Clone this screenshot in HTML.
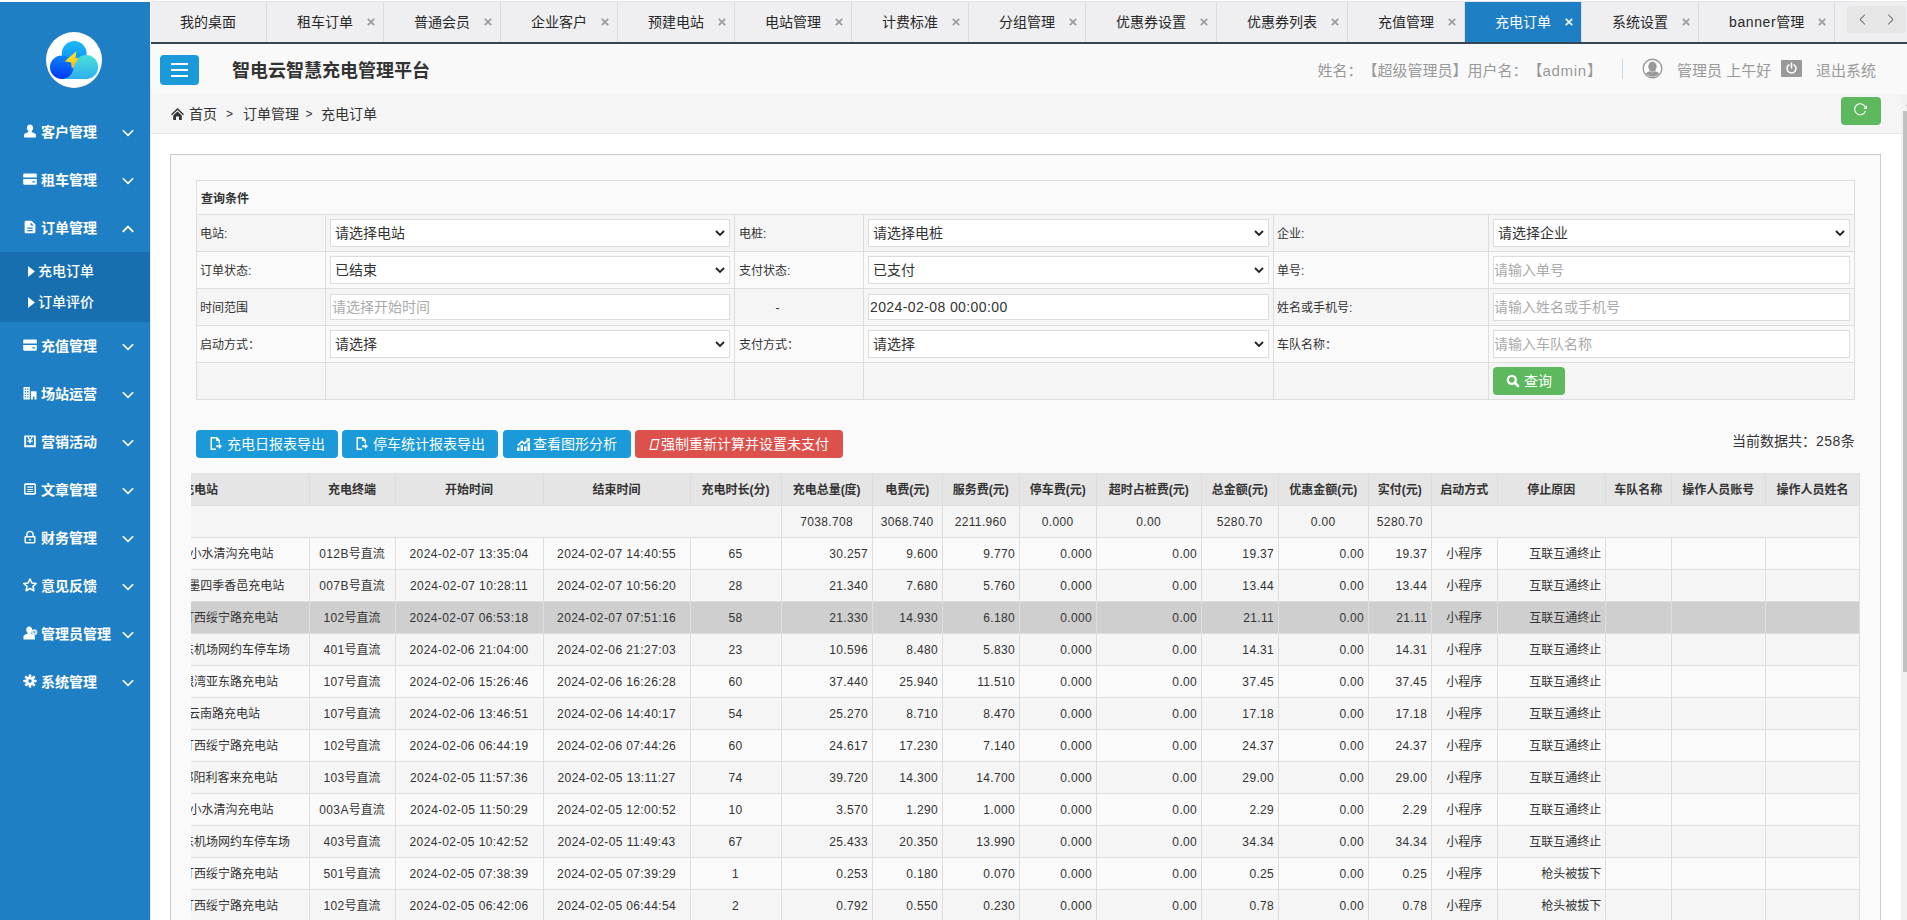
<!DOCTYPE html><html lang="zh-CN"><head><meta charset="utf-8"><title>智电云智慧充电管理平台</title><style>

html,body{margin:0;padding:0}
body{width:1907px;height:920px;overflow:hidden;position:relative;background:#fff;
 font-family:"Liberation Sans","Noto Sans CJK SC",sans-serif;color:#333;font-size:14px;line-height:1.5;text-spacing-trim:space-all}
*{box-sizing:border-box}
.abs{position:absolute}
svg{display:block}
/* sidebar */
#aside{position:absolute;left:0;top:2px;width:150px;height:918px;background:#1f7fc4}
#logo{position:absolute;left:46px;top:30px;width:56px;height:56px;border-radius:50%;background:#fff;overflow:hidden}
.mi{position:absolute;left:0;width:150px;height:48px;color:#fff;font-size:14px;font-weight:bold;line-height:48px}
.mi .ic{position:absolute;left:23px;top:16px;width:14px;height:14px}
.mi .tx{position:absolute;left:41px;top:0;white-space:nowrap}
.mi .ch{position:absolute;left:122px;top:21px;width:12px;height:8px}
#sub{position:absolute;left:0;top:250px;width:150px;height:70px;background:#176fb0}
.si{position:absolute;left:0;width:150px;height:31px;line-height:31px;color:#fff;font-size:14px;font-weight:500}
.si .ar{position:absolute;left:28px;top:10px;width:7px;height:11px}
.si .tx{position:absolute;left:38px;top:0;white-space:nowrap}
/* tabs */
#tabs{position:absolute;left:151px;top:1px;width:1756px;height:43px;border-top:1px solid #e4e4e6;background:#efeff1;border-bottom:2px solid #344556}
.tab{position:absolute;top:0;height:40px;border-right:1px solid #dcdcdd;font-size:14px;line-height:40px;color:#282828;white-space:nowrap}
.tab .t{position:absolute;left:30px;top:0}
.tab .x{position:absolute;right:8px;top:16px;width:8px;height:8px}
.tab.act{background:#1f7fc4;color:#fff}
#tabnav{position:absolute;left:1696px;top:4px;width:59px;height:27px;background:#e6e6e6;border-radius:4px}
/* header */
#hd{position:absolute;left:151px;top:44px;width:1756px;height:50px;background:#f9f9f9}
#mbtn{position:absolute;left:9px;top:11px;width:39px;height:30px;background:#1b9ad9;border-radius:4px}
#title{position:absolute;left:81px;top:2px;line-height:50px;font-size:18px;font-weight:bold;color:#333;white-space:nowrap}
.hinfo{position:absolute;top:1px;line-height:51px;font-size:15px;color:#999;white-space:nowrap}
/* breadcrumb */
#bc{position:absolute;left:151px;top:94px;width:1750px;height:40px;background:#f5f5f5;border-bottom:1px solid #e5e5e5;font-size:14px;color:#333}
#bc span{position:absolute;top:1px;line-height:39px;white-space:nowrap}
#rf{position:absolute;left:1690px;top:3px;width:40px;height:28px;border-radius:4px;background:#5eb95e}
#lb{position:absolute;left:150px;top:44px;width:1px;height:876px;background:#e8e8e8}
/* scrollbar */
#sbt{position:absolute;left:1901px;top:94px;width:6px;height:826px;background:#f1f1f1}
#sbh{position:absolute;left:1903px;top:111px;width:4px;height:561px;background:#c1c1c1}
/* panel */
#panel{position:absolute;left:170px;top:154px;width:1711px;height:800px;border:1px solid #ccc;background:#fafafa}
/* query table */
#q{position:absolute;left:196px;top:180px;border-collapse:collapse;table-layout:fixed;width:1658px;font-size:12px;color:#333}
#q td{border:1px solid #ddd;padding:0;height:37px;vertical-align:top;position:relative}
#q tr.h td{height:34px;background:#fafafa;font-weight:bold;padding:4px 0 0 4px;line-height:29px}
#q tr.o td{background:#f5f5f5}
#q tr.e td{background:#fafafa}
#q td.l{padding:2px 0 0 3px;line-height:34px}
#q td.l3{padding-left:4px}
.sel,.inp{position:absolute;left:4px;top:4px;right:4px;background:#fff;border:1px solid #ddd;font-size:14px;color:#333;white-space:nowrap}
.sel{height:28px;line-height:27px;padding-left:4px}
.sel svg{position:absolute;right:4px;top:10px}
.inp{height:26px;line-height:25px;padding-left:1px;top:5px}
.dt{letter-spacing:.4px}
.inp.b{top:4px;height:28px;line-height:27px;padding-left:0}
.ph{color:#aaa}
#qb{position:absolute;left:4px;top:4px;width:72px;height:28px;border-radius:4px;background:#5eb95e;color:#fff;font-size:14px;line-height:28px}
/* buttons */
.btn{position:absolute;top:430px;height:28px;border-radius:4px;color:#fff;font-size:14px;line-height:28px;white-space:nowrap}
.btn.b{background:#1b9ad9}
.btn.r{background:#dd514c}
.btn .tx{position:absolute;top:0}
.btn svg{position:absolute}
#cnt{position:absolute;left:1732px;top:431px;font-size:14px;line-height:21px;color:#333;white-space:nowrap}
/* data table */
#dw{position:absolute;left:191px;top:473px;width:1669px;height:447px;overflow:hidden}
#d{border-collapse:collapse;table-layout:fixed;width:1669px;font-size:12px;color:#333}
#d td,#d th{border:1px solid #ddd;border-left:none;border-top:none;height:32px;padding:2px 4px 0;line-height:29px;white-space:nowrap;overflow:hidden;font-weight:normal}
#d th{background:#e5e5e5;font-weight:bold;text-align:center;color:#333;padding-top:4px;line-height:27px}
#d tr.s td{background:#f5f5f5;text-align:center}
#d tr.o td{background:#fafafa}
#d tr.e td{background:#f5f5f5}
#d tr.hv td{background:#cfcfcf}
#d .c{text-align:center}
#d .r{text-align:right}
#d .f{text-align:left;padding-left:0;padding-right:0}
#d .f span{display:inline-block}
.num{letter-spacing:.35px}
#d .r.num{padding-right:3.600px}
#d .w{padding-right:3.500px}
#d .tm{letter-spacing:.4px}

</style></head><body>
<div id="aside">
<div id="logo"><svg width="56" height="56" viewBox="0 0 56 56" style=""><defs>
<linearGradient id="g1" x1="0" y1="0" x2="0" y2="1"><stop offset="0" stop-color="#1bb8fa"/><stop offset="1" stop-color="#0a8cf5"/></linearGradient>
<linearGradient id="g2" x1="0.500" y1="0" x2="0.400" y2="1"><stop offset="0" stop-color="#0d84f8"/><stop offset="1" stop-color="#0336f4"/></linearGradient>
<linearGradient id="g3" x1="0" y1="0" x2="0" y2="1"><stop offset="0" stop-color="#4ae0d8"/><stop offset="1" stop-color="#2eb0ee"/></linearGradient>
<linearGradient id="g4" x1="0.300" y1="0" x2="0.700" y2="1"><stop offset="0" stop-color="#ffe61c"/><stop offset=".55" stop-color="#ffd422"/><stop offset="1" stop-color="#f9a631"/></linearGradient>
</defs>
<circle cx="28.200" cy="21.500" r="12.400" fill="url(#g1)"/>
<path d="M16 46.900h24.200a11.900 11.900 0 1 0-11.900-11.900H26V40H16z" fill="url(#g3)"/>
<circle cx="15.700" cy="35.200" r="11.700" fill="url(#g2)"/>
<path d="M30.400 19.200L18.800 29.200l6.300 1.200.8 6.500 6.600-10.600-3-.3z" fill="url(#g4)"/></svg></div>
<div class="mi" style="top:106px"><span class="ic"><svg width="14" height="14" viewBox="0 0 14 14" style=""><path fill="#fff" d="M7 .6c1.9 0 3.1 1.4 3.1 3.3 0 1.3-.6 2.5-1.4 3.2v.9l3.300 1.400c.6.3.9.8.9 1.400v2.600H1.100v-2.600c0-.6.3-1.100.9-1.400L5.300 8V7.100C4.500 6.400 3.900 5.200 3.900 3.900 3.900 2 5.100.6 7 .6z"/></svg></span><span class="tx">客户管理</span><span class="ch"><svg width="12" height="8" viewBox="0 0 12 8" style=""><path fill="none" stroke="#fff" stroke-width="1.600" d="M.8 1.200L6 6.400 11.200 1.200"/></svg></span></div>
<div class="mi" style="top:154px"><span class="ic"><svg width="14" height="14" viewBox="0 0 14 14" style=""><path fill="#fff" fill-rule="evenodd" d="M1.400 1.600h11.200c.7 0 1.200.5 1.200 1.200V5.500H.2V2.800c0-.7.5-1.200 1.200-1.200zM.2 7h13.600v4.600c0 .7-.5 1.200-1.200 1.200H1.400c-.7 0-1.200-.5-1.200-1.200zM9.400 9.200v1.300h2.600V9.200z"/></svg></span><span class="tx">租车管理</span><span class="ch"><svg width="12" height="8" viewBox="0 0 12 8" style=""><path fill="none" stroke="#fff" stroke-width="1.600" d="M.8 1.200L6 6.400 11.200 1.200"/></svg></span></div>
<div class="mi" style="top:202px"><span class="ic"><svg width="14" height="14" viewBox="0 0 14 14" style=""><path fill="#fff" fill-rule="evenodd" d="M3 .8h5.600L12.400 4.500V11.700c0 .9-.7 1.600-1.600 1.600H3.200c-.9 0-1.600-.7-1.600-1.600V2.300C1.600 1.500 2.200.8 3 .8zM7.600 2.400v3.100h3.200zM4.300 7.400v1.300h5.400V7.400zM4.300 9.900v1.300h5.400V9.900z"/></svg></span><span class="tx">订单管理</span><span class="ch"><svg width="12" height="8" viewBox="0 0 12 8" style=""><path fill="none" stroke="#fff" stroke-width="1.900" d="M.8 6.800L6 1.600 11.200 6.800"/></svg></span></div>
<div class="mi" style="top:320px"><span class="ic"><svg width="14" height="14" viewBox="0 0 14 14" style=""><path fill="#fff" fill-rule="evenodd" d="M1.400 1.600h11.200c.7 0 1.200.5 1.200 1.200V5.500H.2V2.800c0-.7.5-1.200 1.200-1.200zM.2 7h13.600v4.600c0 .7-.5 1.200-1.200 1.200H1.400c-.7 0-1.200-.5-1.200-1.200zM9.400 9.200v1.300h2.600V9.200z"/></svg></span><span class="tx">充值管理</span><span class="ch"><svg width="12" height="8" viewBox="0 0 12 8" style=""><path fill="none" stroke="#fff" stroke-width="1.600" d="M.8 1.200L6 6.400 11.200 1.200"/></svg></span></div>
<div class="mi" style="top:368px"><span class="ic"><svg width="14" height="14" viewBox="0 0 14 14" style=""><path fill="#fff" fill-rule="evenodd" d="M.5 1h6.300v12.500H.5zM7.900 5.200H13.500V13.500H11.400V10.500H9.900v3H7.900zM1.800 2.500v1.300h1.300V2.500zM4.200 2.500v1.300h1.300V2.500zM1.800 5.100v1.300h1.300V5.100zM4.200 5.100v1.300h1.300V5.100zM1.800 7.700V9h1.300V7.700zM4.200 7.700V9h1.300V7.700zM1.800 10.300v1.300h1.300v-1.300zM4.200 10.300v1.300h1.300v-1.300z"/></svg></span><span class="tx">场站运营</span><span class="ch"><svg width="12" height="8" viewBox="0 0 12 8" style=""><path fill="none" stroke="#fff" stroke-width="1.600" d="M.8 1.200L6 6.400 11.200 1.200"/></svg></span></div>
<div class="mi" style="top:416px"><span class="ic"><svg width="14" height="14" viewBox="0 0 14 14" style=""><path fill="#fff" fill-rule="evenodd" d="M1.200 1.500h11.600v11.800H1.200zM3.100 2.800v8.400h7.800V2.800zM4.200 2.800h1.400L7 5.600 8.400 2.800H9.800L7.800 6.600H9.700v1.100H7.700v1.900H6.300V7.700H4.300V6.600H6.200z"/></svg></span><span class="tx">营销活动</span><span class="ch"><svg width="12" height="8" viewBox="0 0 12 8" style=""><path fill="none" stroke="#fff" stroke-width="1.600" d="M.8 1.200L6 6.400 11.200 1.200"/></svg></span></div>
<div class="mi" style="top:464px"><span class="ic"><svg width="14" height="14" viewBox="0 0 14 14" style=""><path fill="#fff" fill-rule="evenodd" d="M2.700 1.300h8.600c1 0 1.700.7 1.700 1.700v8c0 1-.7 1.700-1.700 1.700H2.700C1.700 12.700 1 12 1 11V3c0-1 .7-1.700 1.700-1.700zM2.500 2.900v8.200h9V2.900zM4.300 4.400h5.800v1.400H4.300zM4.300 7h5.800v1H4.300zM4.300 9h5.800v1H4.300z"/></svg></span><span class="tx">文章管理</span><span class="ch"><svg width="12" height="8" viewBox="0 0 12 8" style=""><path fill="none" stroke="#fff" stroke-width="1.600" d="M.8 1.200L6 6.400 11.200 1.200"/></svg></span></div>
<div class="mi" style="top:512px"><span class="ic"><svg width="14" height="14" viewBox="0 0 14 14" style=""><path fill="#fff" fill-rule="evenodd" d="M7 .7c2.100 0 3.800 1.600 3.800 3.700V6h.5c.7 0 1.200.5 1.200 1.200v5c0 .7-.5 1.200-1.200 1.200H2.700c-.7 0-1.200-.5-1.200-1.200v-5C1.500 6.500 2 6 2.700 6h.5V4.400C3.200 2.300 4.900.7 7 .7zM4.600 6h4.800V4.400C9.400 3.100 8.300 2.100 7 2.100S4.600 3.100 4.600 4.400zM2.900 7.400v4.600h8.200V7.400zM6.100 8.900h1.800v1.700H6.100z"/></svg></span><span class="tx">财务管理</span><span class="ch"><svg width="12" height="8" viewBox="0 0 12 8" style=""><path fill="none" stroke="#fff" stroke-width="1.600" d="M.8 1.200L6 6.400 11.200 1.200"/></svg></span></div>
<div class="mi" style="top:560px"><span class="ic"><svg width="14" height="14" viewBox="0 0 14 14" style=""><path fill="none" stroke="#fff" stroke-width="1.600" stroke-linejoin="round" d="M7 1l1.900 4 4.300.5-3.200 2.900.9 4.300L7 10.500 3.100 12.700l.9-4.300L.8 5.500l4.300-.5z"/></svg></span><span class="tx">意见反馈</span><span class="ch"><svg width="12" height="8" viewBox="0 0 12 8" style=""><path fill="none" stroke="#fff" stroke-width="1.600" d="M.8 1.200L6 6.400 11.200 1.200"/></svg></span></div>
<div class="mi" style="top:608px"><span class="ic"><svg width="15" height="14" viewBox="0 0 15 14" style=""><path fill="#fff" d="M6.200.5c1.800 0 3 1.400 3 3.200 0 1.300-.6 2.400-1.300 3.100v.9l3.100 1.300c.6.300.9.800.9 1.400v3H.5v-3c0-.6.300-1.100.9-1.400L4.500 7.700V6.800C3.800 6.100 3.200 5 3.200 3.700c0-1.800 1.200-3.200 3-3.200z"/><circle cx="11.400" cy="6.200" r="3" fill="#fff" fill-opacity=".8"/><circle cx="11.400" cy="6.200" r="1.100" fill="#1f7fc4" fill-opacity=".5"/></svg></span><span class="tx">管理员管理</span><span class="ch"><svg width="12" height="8" viewBox="0 0 12 8" style=""><path fill="none" stroke="#fff" stroke-width="1.600" d="M.8 1.200L6 6.400 11.200 1.200"/></svg></span></div>
<div class="mi" style="top:656px"><span class="ic"><svg width="14" height="14" viewBox="0 0 14 14" style=""><g fill="#fff"><circle cx="7" cy="7" r="4.300"/><g transform="rotate(0 7 7)"><rect x="5.700" y=".4" width="2.600" height="3" rx=".6"/><rect x="5.700" y="10.600" width="2.600" height="3" rx=".6"/></g><g transform="rotate(45 7 7)"><rect x="5.700" y=".4" width="2.600" height="3" rx=".6"/><rect x="5.700" y="10.600" width="2.600" height="3" rx=".6"/></g><g transform="rotate(90 7 7)"><rect x="5.700" y=".4" width="2.600" height="3" rx=".6"/><rect x="5.700" y="10.600" width="2.600" height="3" rx=".6"/></g><g transform="rotate(135 7 7)"><rect x="5.700" y=".4" width="2.600" height="3" rx=".6"/><rect x="5.700" y="10.600" width="2.600" height="3" rx=".6"/></g></g><circle cx="7" cy="7" r="1.700" fill="#1f7fc4"/></svg></span><span class="tx">系统管理</span><span class="ch"><svg width="12" height="8" viewBox="0 0 12 8" style=""><path fill="none" stroke="#fff" stroke-width="1.600" d="M.8 1.200L6 6.400 11.200 1.200"/></svg></span></div>
<div id="sub">
<div class="si" style="top:4px"><span class="ar"><svg width="7" height="11" viewBox="0 0 7 11" style=""><path fill="#fff" d="M0 0L7 5.500 0 11z"/></svg></span><span class="tx">充电订单</span></div>
<div class="si" style="top:35px"><span class="ar"><svg width="7" height="11" viewBox="0 0 7 11" style=""><path fill="#fff" d="M0 0L7 5.500 0 11z"/></svg></span><span class="tx">订单评价</span></div>
</div></div>
<div id="tabs">
<div class="tab" style="left:0px;width:116px"><span class="t" style="left:29px">我的桌面</span></div>
<div class="tab" style="left:116px;width:117px"><span class="t">租车订单</span><span class="x"><svg width="8" height="8" viewBox="0 0 8 8" style=""><path stroke="#9c9c9c" stroke-width="1.700" d="M.8.8l6.400 6.400M7.200.8L.8 7.200"/></svg></span></div>
<div class="tab" style="left:233px;width:117px"><span class="t">普通会员</span><span class="x"><svg width="8" height="8" viewBox="0 0 8 8" style=""><path stroke="#9c9c9c" stroke-width="1.700" d="M.8.8l6.400 6.400M7.200.8L.8 7.200"/></svg></span></div>
<div class="tab" style="left:350px;width:117px"><span class="t">企业客户</span><span class="x"><svg width="8" height="8" viewBox="0 0 8 8" style=""><path stroke="#9c9c9c" stroke-width="1.700" d="M.8.8l6.400 6.400M7.200.8L.8 7.200"/></svg></span></div>
<div class="tab" style="left:467px;width:117px"><span class="t">预建电站</span><span class="x"><svg width="8" height="8" viewBox="0 0 8 8" style=""><path stroke="#9c9c9c" stroke-width="1.700" d="M.8.8l6.400 6.400M7.200.8L.8 7.200"/></svg></span></div>
<div class="tab" style="left:584px;width:117px"><span class="t">电站管理</span><span class="x"><svg width="8" height="8" viewBox="0 0 8 8" style=""><path stroke="#9c9c9c" stroke-width="1.700" d="M.8.8l6.400 6.400M7.200.8L.8 7.200"/></svg></span></div>
<div class="tab" style="left:701px;width:117px"><span class="t">计费标准</span><span class="x"><svg width="8" height="8" viewBox="0 0 8 8" style=""><path stroke="#9c9c9c" stroke-width="1.700" d="M.8.8l6.400 6.400M7.200.8L.8 7.200"/></svg></span></div>
<div class="tab" style="left:818px;width:117px"><span class="t">分组管理</span><span class="x"><svg width="8" height="8" viewBox="0 0 8 8" style=""><path stroke="#9c9c9c" stroke-width="1.700" d="M.8.8l6.400 6.400M7.200.8L.8 7.200"/></svg></span></div>
<div class="tab" style="left:935px;width:131px"><span class="t">优惠券设置</span><span class="x"><svg width="8" height="8" viewBox="0 0 8 8" style=""><path stroke="#9c9c9c" stroke-width="1.700" d="M.8.8l6.400 6.400M7.200.8L.8 7.200"/></svg></span></div>
<div class="tab" style="left:1066px;width:131px"><span class="t">优惠券列表</span><span class="x"><svg width="8" height="8" viewBox="0 0 8 8" style=""><path stroke="#9c9c9c" stroke-width="1.700" d="M.8.8l6.400 6.400M7.200.8L.8 7.200"/></svg></span></div>
<div class="tab" style="left:1197px;width:117px"><span class="t">充值管理</span><span class="x"><svg width="8" height="8" viewBox="0 0 8 8" style=""><path stroke="#9c9c9c" stroke-width="1.700" d="M.8.8l6.400 6.400M7.200.8L.8 7.200"/></svg></span></div>
<div class="tab act" style="left:1314px;width:117px"><span class="t">充电订单</span><span class="x"><svg width="8" height="8" viewBox="0 0 8 8" style=""><path stroke="#e8f0f8" stroke-width="1.800" d="M.8.8l6.400 6.400M7.200.8L.8 7.200"/></svg></span></div>
<div class="tab" style="left:1431px;width:117px"><span class="t">系统设置</span><span class="x"><svg width="8" height="8" viewBox="0 0 8 8" style=""><path stroke="#9c9c9c" stroke-width="1.700" d="M.8.8l6.400 6.400M7.200.8L.8 7.200"/></svg></span></div>
<div class="tab" style="left:1548px;width:136px"><span class="t"><span style="letter-spacing:.6px">banner</span>管理</span><span class="x"><svg width="8" height="8" viewBox="0 0 8 8" style=""><path stroke="#9c9c9c" stroke-width="1.700" d="M.8.8l6.400 6.400M7.200.8L.8 7.200"/></svg></span></div>
<div id="tabnav"><svg width="58" height="27" viewBox="0 0 58 27" style=""><path fill="none" stroke="#3c3c4c" stroke-width="1" d="M17.800 8.800l-4.800 4.700 4.800 4.700M41.300 8.800l4.800 4.700-4.800 4.700"/></svg></div>
</div>
<div id="hd">
<div id="mbtn"><svg width="39" height="30" viewBox="0 0 39 30" style=""><path stroke="#fff" stroke-width="2" d="M11 9h17M11 15h17M11 21h17"/></svg></div>
<div id="title">智电云智慧充电管理平台</div>
<div class="hinfo" style="left:1166.500px">姓名：【超级管理员】用户名：【<span style="letter-spacing:.7px">admin</span>】</div>
<div class="abs" style="left:1471px;top:15px;width:1px;height:20px;background:#c5dcec"></div>
<div class="abs" style="left:1491px;top:14px"><svg width="21" height="21" viewBox="0 0 21 21" style=""><defs><clipPath id="uc"><circle cx="10.500" cy="10.500" r="8.300"/></clipPath></defs><circle cx="10.500" cy="10.500" r="9.300" fill="#fff" stroke="#999" stroke-width="1.400"/><g clip-path="url(#uc)" fill="#999"><ellipse cx="10.500" cy="8.600" rx="4.200" ry="5.200"/><path d="M1.500 21c0-5.500 3.500-7 6.500-7.800l2.500 1.300 2.500-1.300c3 .8 6.500 2.300 6.500 7.800z"/></g></svg></div>
<div class="hinfo" style="left:1526px">管理员 上午好</div>
<div class="abs" style="left:1630px;top:16px;width:21px;height:17px;background:#999;border-radius:1px"><svg width="21" height="17" viewBox="0 0 21 17" style=""><path fill="none" stroke="#fff" stroke-width="1.500" stroke-linecap="round" d="M8 4.800a4.500 4.500 0 1 0 5 0M10.500 3v5"/></svg></div>
<div class="hinfo" style="left:1665px">退出系统</div>
</div>
<div id="bc">
<div class="abs" style="left:19.500px;top:13.500px"><svg width="13" height="12" viewBox="0 0 13 12" style=""><path fill="#333" d="M6.500 0L13 6.200l-1 1L6.500 2.100 1 7.200l-1-1zM6.500 3.500l4.300 4V12H8V8.500H5V12H2.200V7.500z"/></svg></div>
<span style="left:38px">首页</span><span style="left:75px;font-size:12px">&gt;</span><span style="left:92px">订单管理</span><span style="left:154.500px;font-size:12px">&gt;</span><span style="left:170px">充电订单</span>
<div id="rf"><svg width="40" height="28" viewBox="0 0 40 28" style=""><path fill="none" stroke="#fff" stroke-width="1.100" d="M24.300 10.300a5.500 5.500 0 1 0 .1 3.700"/><path fill="#fff" d="M26 8.200v3.700h-3.700z"/></svg></div>
</div>
<div id="lb"></div>
<div id="sbt"></div><div id="sbh"></div>
<div class="abs" style="left:1905.500px;top:102px;width:0;height:0;border-left:4px solid transparent;border-right:4px solid transparent;border-bottom:4px solid #505050"></div>
<div id="panel"></div>
<table id="q"><colgroup><col style="width:129px"><col style="width:409px"><col style="width:129px"><col style="width:410px"><col style="width:215px"><col style="width:366px"></colgroup>
<tr class="h"><td colspan="6">查询条件</td></tr>
<tr class="o"><td class="l">电站:</td><td><div class="sel">请选择电站<svg width="10" height="7" viewBox="0 0 10 7" style=""><path fill="none" stroke="#222" stroke-width="1.800" d="M1 1l4 4 4-4"/></svg></div></td><td class="l l3">电桩:</td><td><div class="sel">请选择电桩<svg width="10" height="7" viewBox="0 0 10 7" style=""><path fill="none" stroke="#222" stroke-width="1.800" d="M1 1l4 4 4-4"/></svg></div></td><td class="l">企业:</td><td><div class="sel">请选择企业<svg width="10" height="7" viewBox="0 0 10 7" style=""><path fill="none" stroke="#222" stroke-width="1.800" d="M1 1l4 4 4-4"/></svg></div></td></tr>
<tr class="e"><td class="l">订单状态:</td><td><div class="sel">已结束<svg width="10" height="7" viewBox="0 0 10 7" style=""><path fill="none" stroke="#222" stroke-width="1.800" d="M1 1l4 4 4-4"/></svg></div></td><td class="l l3">支付状态:</td><td><div class="sel">已支付<svg width="10" height="7" viewBox="0 0 10 7" style=""><path fill="none" stroke="#222" stroke-width="1.800" d="M1 1l4 4 4-4"/></svg></div></td><td class="l">单号:</td><td><div class="inp ph b">请输入单号</div></td></tr>
<tr class="o"><td class="l">时间范围</td><td><div class="inp ph">请选择开始时间</div></td><td class="l" style="text-align:center;padding:2px 43px 0 0">-</td><td><div class="inp"><span class=dt>2024-02-08 00:00:00</span></div></td><td class="l">姓名或手机号:</td><td><div class="inp ph b">请输入姓名或手机号</div></td></tr>
<tr class="e"><td class="l">启动方式：</td><td><div class="sel">请选择<svg width="10" height="7" viewBox="0 0 10 7" style=""><path fill="none" stroke="#222" stroke-width="1.800" d="M1 1l4 4 4-4"/></svg></div></td><td class="l l3">支付方式：</td><td><div class="sel">请选择<svg width="10" height="7" viewBox="0 0 10 7" style=""><path fill="none" stroke="#222" stroke-width="1.800" d="M1 1l4 4 4-4"/></svg></div></td><td class="l">车队名称：</td><td><div class="inp ph b">请输入车队名称</div></td></tr>
<tr class="o"><td></td><td></td><td></td><td></td><td></td><td><div id="qb"><svg width="14" height="14" viewBox="0 0 14 14" style="position:absolute;left:13px;top:6.500px"><circle cx="5.800" cy="5.800" r="4" fill="none" stroke="#fff" stroke-width="2.300"/><path stroke="#fff" stroke-width="2.600" stroke-linecap="round" d="M9 9l3 3"/></svg><span style="position:absolute;left:31px;top:0">查询</span></div></td></tr>
</table>
<div class="btn b" style="left:196px;width:142px"><svg style="left:14px;top:7px" width="12" height="13" viewBox="0 0 12 13" style=""><path fill="#fff" fill-rule="evenodd" d="M1.500 0H7l3 3v3.200H8.500V4H6V1.500H2v10h4V13H1.500C.7 13 .5 12.600.5 12V1C.5.400.8 0 1.500 0zM9 6.500L12 9.300 9 12v-1.800H6.300V8.300H9z"/></svg><span class="tx" style="left:31px">充电日报表导出</span></div>
<div class="btn b" style="left:342px;width:156px"><svg style="left:14px;top:7px" width="12" height="13" viewBox="0 0 12 13" style=""><path fill="#fff" fill-rule="evenodd" d="M1.500 0H7l3 3v3.200H8.500V4H6V1.500H2v10h4V13H1.500C.7 13 .5 12.600.5 12V1C.5.400.8 0 1.500 0zM9 6.500L12 9.300 9 12v-1.800H6.300V8.300H9z"/></svg><span class="tx" style="left:31px">停车统计报表导出</span></div>
<div class="btn b" style="left:503px;width:128px"><svg style="left:13.500px;top:7.500px" width="13" height="13" viewBox="0 0 13 13" style=""><path fill="#fff" d="M0 9.500h2.500V13H0zM3.500 7h2.500v6H3.500zM7 8.500h2.500V13H7zM10.500 4.500H13V13h-2.500zM.3 6.800L5 2.300l2.300 2.200L10.200 1.700 8.800.3h4v4L11.400 2.900 7.300 6.800 5 4.600 1.400 8z"/></svg><span class="tx" style="left:30px">查看图形分析</span></div>
<div class="btn r" style="left:635px;width:208px"><svg width="11" height="11" viewBox="0 0 11 11" style="left:13.500px;top:9px"><path fill="none" stroke="#fff" stroke-width="1.200" d="M3.300.6h6.600L7.700 10.400H1.100z"/></svg><span class="tx" style="left:26px">强制重新计算并设置未支付</span></div>
<div id="cnt">当前数据共：<span style="letter-spacing:.5px">258</span>条</div>
<div id="dw"><table id="d"><colgroup><col style="width:118px"><col style="width:86px"><col style="width:148px"><col style="width:147px"><col style="width:91px"><col style="width:91px"><col style="width:70px"><col style="width:77px"><col style="width:77px"><col style="width:105px"><col style="width:77px"><col style="width:90px"><col style="width:63px"><col style="width:66px"><col style="width:108px"><col style="width:66px"><col style="width:94px"><col style="width:94px"></colgroup>
<tr><th class="f"><span style="margin-left:-9px">充电站</span></th><th>充电终端</th><th>开始时间</th><th>结束时间</th><th>充电时长(分)</th><th>充电总量(度)</th><th>电费(元)</th><th>服务费(元)</th><th>停车费(元)</th><th>超时占桩费(元)</th><th>总金额(元)</th><th>优惠金额(元)</th><th>实付(元)</th><th>启动方式</th><th>停止原因</th><th>车队名称</th><th>操作人员账号</th><th>操作人员姓名</th></tr>
<tr class="s"><td colspan="5"></td><td class="num">7038.708</td><td class="num">3068.740</td><td class="num">2211.960</td><td class="num">0.000</td><td class="num">0.00</td><td class="num">5280.70</td><td class="num">0.00</td><td class="num">5280.70</td><td colspan="5"></td></tr>
<tr class="o"><td class="f"><span style="margin-left:-1.5px">小水清沟充电站</span></td><td class="c"><span class="num">012B</span>号直流</td><td class="c tm">2024-02-07 13:35:04</td><td class="c tm">2024-02-07 14:40:55</td><td class="c num">65</td><td class="r num">30.257</td><td class="r num">9.600</td><td class="r num">9.770</td><td class="r num">0.000</td><td class="r num">0.00</td><td class="r num">19.37</td><td class="r num">0.00</td><td class="r num">19.37</td><td class="c">小程序</td><td class="r w">互联互通终止</td><td></td><td></td><td></td></tr>
<tr class="e"><td class="f"><span style="margin-left:-2.7px">墨四季香邑充电站</span></td><td class="c"><span class="num">007B</span>号直流</td><td class="c tm">2024-02-07 10:28:11</td><td class="c tm">2024-02-07 10:56:20</td><td class="c num">28</td><td class="r num">21.340</td><td class="r num">7.680</td><td class="r num">5.760</td><td class="r num">0.000</td><td class="r num">0.00</td><td class="r num">13.44</td><td class="r num">0.00</td><td class="r num">13.44</td><td class="c">小程序</td><td class="r w">互联互通终止</td><td></td><td></td><td></td></tr>
<tr class="hv"><td class="f"><span style="margin-left:-9px">汀西绥宁路充电站</span></td><td class="c"><span class="num">102</span>号直流</td><td class="c tm">2024-02-07 06:53:18</td><td class="c tm">2024-02-07 07:51:16</td><td class="c num">58</td><td class="r num">21.330</td><td class="r num">14.930</td><td class="r num">6.180</td><td class="r num">0.000</td><td class="r num">0.00</td><td class="r num">21.11</td><td class="r num">0.00</td><td class="r num">21.11</td><td class="c">小程序</td><td class="r w">互联互通终止</td><td></td><td></td><td></td></tr>
<tr class="e"><td class="f"><span style="margin-left:-9px">东机场网约车停车场</span></td><td class="c"><span class="num">401</span>号直流</td><td class="c tm">2024-02-06 21:04:00</td><td class="c tm">2024-02-06 21:27:03</td><td class="c num">23</td><td class="r num">10.596</td><td class="r num">8.480</td><td class="r num">5.830</td><td class="r num">0.000</td><td class="r num">0.00</td><td class="r num">14.31</td><td class="r num">0.00</td><td class="r num">14.31</td><td class="c">小程序</td><td class="r w">互联互通终止</td><td></td><td></td><td></td></tr>
<tr class="o"><td class="f"><span style="margin-left:-9px">银湾亚东路充电站</span></td><td class="c"><span class="num">107</span>号直流</td><td class="c tm">2024-02-06 15:26:46</td><td class="c tm">2024-02-06 16:26:28</td><td class="c num">60</td><td class="r num">37.440</td><td class="r num">25.940</td><td class="r num">11.510</td><td class="r num">0.000</td><td class="r num">0.00</td><td class="r num">37.45</td><td class="r num">0.00</td><td class="r num">37.45</td><td class="c">小程序</td><td class="r w">互联互通终止</td><td></td><td></td><td></td></tr>
<tr class="e"><td class="f"><span style="margin-left:-3px">云南路充电站</span></td><td class="c"><span class="num">107</span>号直流</td><td class="c tm">2024-02-06 13:46:51</td><td class="c tm">2024-02-06 14:40:17</td><td class="c num">54</td><td class="r num">25.270</td><td class="r num">8.710</td><td class="r num">8.470</td><td class="r num">0.000</td><td class="r num">0.00</td><td class="r num">17.18</td><td class="r num">0.00</td><td class="r num">17.18</td><td class="c">小程序</td><td class="r w">互联互通终止</td><td></td><td></td><td></td></tr>
<tr class="o"><td class="f"><span style="margin-left:-9px">汀西绥宁路充电站</span></td><td class="c"><span class="num">102</span>号直流</td><td class="c tm">2024-02-06 06:44:19</td><td class="c tm">2024-02-06 07:44:26</td><td class="c num">60</td><td class="r num">24.617</td><td class="r num">17.230</td><td class="r num">7.140</td><td class="r num">0.000</td><td class="r num">0.00</td><td class="r num">24.37</td><td class="r num">0.00</td><td class="r num">24.37</td><td class="c">小程序</td><td class="r w">互联互通终止</td><td></td><td></td><td></td></tr>
<tr class="e"><td class="f"><span style="margin-left:-9.5px">邵阳利客来充电站</span></td><td class="c"><span class="num">103</span>号直流</td><td class="c tm">2024-02-05 11:57:36</td><td class="c tm">2024-02-05 13:11:27</td><td class="c num">74</td><td class="r num">39.720</td><td class="r num">14.300</td><td class="r num">14.700</td><td class="r num">0.000</td><td class="r num">0.00</td><td class="r num">29.00</td><td class="r num">0.00</td><td class="r num">29.00</td><td class="c">小程序</td><td class="r w">互联互通终止</td><td></td><td></td><td></td></tr>
<tr class="o"><td class="f"><span style="margin-left:-1.5px">小水清沟充电站</span></td><td class="c"><span class="num">003A</span>号直流</td><td class="c tm">2024-02-05 11:50:29</td><td class="c tm">2024-02-05 12:00:52</td><td class="c num">10</td><td class="r num">3.570</td><td class="r num">1.290</td><td class="r num">1.000</td><td class="r num">0.000</td><td class="r num">0.00</td><td class="r num">2.29</td><td class="r num">0.00</td><td class="r num">2.29</td><td class="c">小程序</td><td class="r w">互联互通终止</td><td></td><td></td><td></td></tr>
<tr class="e"><td class="f"><span style="margin-left:-9px">东机场网约车停车场</span></td><td class="c"><span class="num">403</span>号直流</td><td class="c tm">2024-02-05 10:42:52</td><td class="c tm">2024-02-05 11:49:43</td><td class="c num">67</td><td class="r num">25.433</td><td class="r num">20.350</td><td class="r num">13.990</td><td class="r num">0.000</td><td class="r num">0.00</td><td class="r num">34.34</td><td class="r num">0.00</td><td class="r num">34.34</td><td class="c">小程序</td><td class="r w">互联互通终止</td><td></td><td></td><td></td></tr>
<tr class="o"><td class="f"><span style="margin-left:-9px">汀西绥宁路充电站</span></td><td class="c"><span class="num">501</span>号直流</td><td class="c tm">2024-02-05 07:38:39</td><td class="c tm">2024-02-05 07:39:29</td><td class="c num">1</td><td class="r num">0.253</td><td class="r num">0.180</td><td class="r num">0.070</td><td class="r num">0.000</td><td class="r num">0.00</td><td class="r num">0.25</td><td class="r num">0.00</td><td class="r num">0.25</td><td class="c">小程序</td><td class="r w">枪头被拔下</td><td></td><td></td><td></td></tr>
<tr class="e"><td class="f"><span style="margin-left:-9px">汀西绥宁路充电站</span></td><td class="c"><span class="num">102</span>号直流</td><td class="c tm">2024-02-05 06:42:06</td><td class="c tm">2024-02-05 06:44:54</td><td class="c num">2</td><td class="r num">0.792</td><td class="r num">0.550</td><td class="r num">0.230</td><td class="r num">0.000</td><td class="r num">0.00</td><td class="r num">0.78</td><td class="r num">0.00</td><td class="r num">0.78</td><td class="c">小程序</td><td class="r w">枪头被拔下</td><td></td><td></td><td></td></tr>
</table></div>
</body></html>
